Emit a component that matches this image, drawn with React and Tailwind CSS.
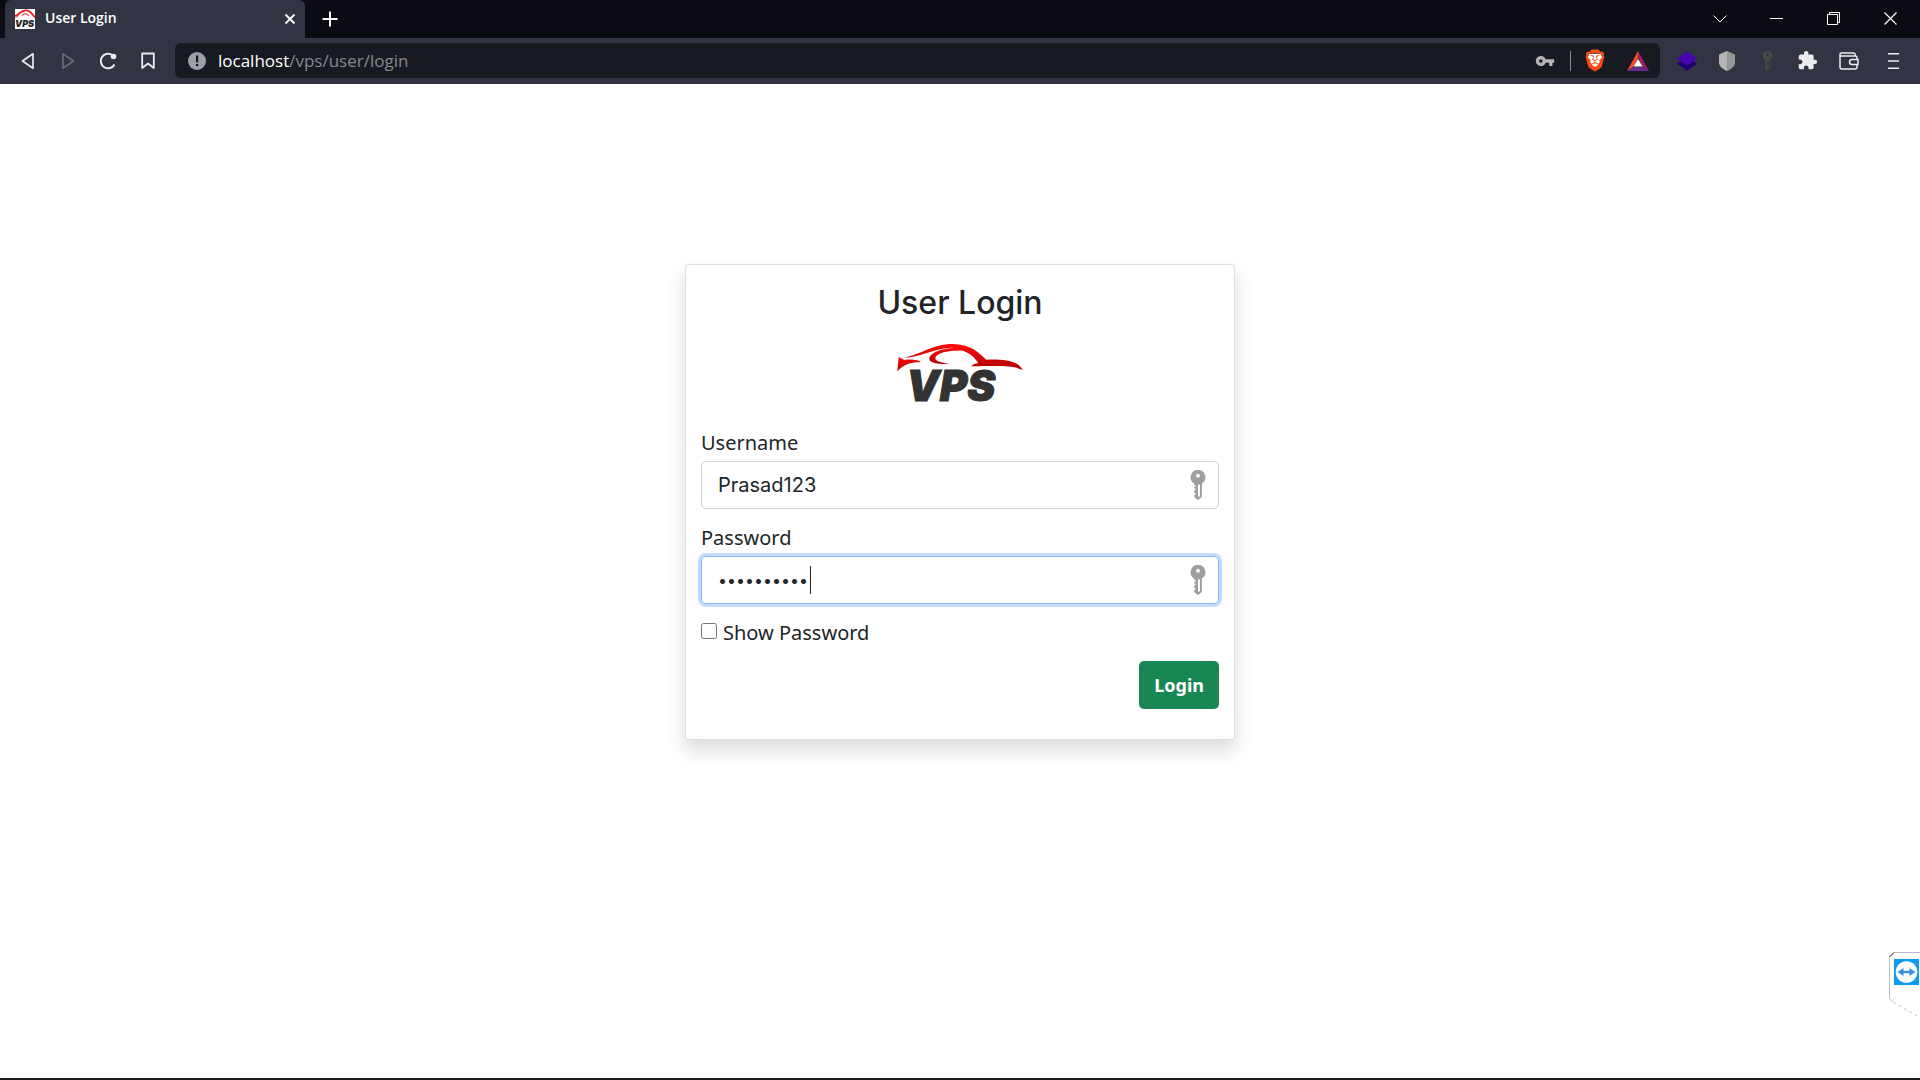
import React, { useState } from "react";
import { MdExtension, MdVpnKey } from "react-icons/md";
import { SiBrave } from "react-icons/si";

function CarOutline() {
  return (
    <>
      <path d="M130 263C185 253 215 222 277 222C330 223 352 245 378 269C425 267 478 272 487 301C465 288 440 287 333 289C337 283 345 281 354 280C347 266 327 241 275 233C225 233 185 261 130 263Z" />
      <path d="M312 236C255 228 205 248 207 268C209 280 235 283 269 282C240 277 225 274 225 264C226 250 265 240 312 242Z" />
      <path d="M115 261L132 270C150 267 177 269 181 277C155 276 130 283 111 304Z" />
    </>
  );
}

function VpsLogo({ className }) {
  return (
    <svg viewBox="110 213 381 192" className={className} role="img" aria-label="VPS">
      <defs>
        <linearGradient id="carRed" x1="0" y1="0" x2="0" y2="1">
          <stop offset="0" stopColor="#ff0a0a" />
          <stop offset="1" stopColor="#b00000" />
        </linearGradient>
      </defs>
      <g fill="url(#carRed)">
        <CarOutline />
      </g>
      <text
        x="138"
        y="394"
        fontFamily="Inter, 'Liberation Sans', sans-serif"
        fontSize="126"
        fontWeight="900"
        fontStyle="italic"
        fill="#333333"
        stroke="#333333"
        strokeWidth="3"
      >
        VPS
      </text>
    </svg>
  );
}

function Favicon() {
  return (
    <svg viewBox="0 0 20 20" className="h-5 w-5 overflow-visible bg-white" aria-hidden="true">
      <path d="M0 7C4 6 5 2 10 1.500S16 4 20 8.500" fill="none" stroke="#e32222" strokeWidth="1.800" />
      <path d="M0 8.500L4 6.500M7 7C8 4 12 4 14 7" fill="none" stroke="#e86060" strokeWidth="1.300" />
      <text x="0" y="18" fontFamily="Inter, sans-serif" fontSize="9" fontWeight="900" fontStyle="italic" fill="#222222">
        VPS
      </text>
    </svg>
  );
}

function KeyIcon({ className }) {
  return (
    <svg viewBox="0 0 16 31" className={className} fill="currentColor" aria-hidden="true">
      <path fillRule="evenodd" d="M8 0a7.500 7.500 0 0 1 4 13.900V28l-4 3-4-3v-2l2-1-2-2v-1.500l2-1.500-2-1.500V18l2-1.500L4 15v-1.100A7.500 7.500 0 0 1 8 0ZM8 4a2 2 0 1 0 0 4 2 2 0 0 0 0-4ZM8 15v12.500h2V15Z" />
    </svg>
  );
}

function TabStrip() {
  return (
    <div className="flex h-[38px] items-stretch bg-[#0b0b14] pl-[5px] text-white">
      <div className="flex w-[300px] items-center rounded-t-md bg-[#323443] pr-[7px] pl-[10px]" role="tab" aria-selected="true">
        <Favicon />
        <span className="ml-[10px] flex-1 pb-[2px] text-[14px] leading-5 font-semibold">User Login</span>
        <button type="button" aria-label="Close tab" className="p-[2px]">
          <svg viewBox="0 0 12 12" className="h-3 w-3" stroke="currentColor" strokeWidth="1.800">
            <path d="M1.500 1.500l9 9M10.500 1.500l-9 9" />
          </svg>
        </button>
      </div>
      <button type="button" aria-label="New tab" className="flex w-[50px] items-center justify-center">
        <svg viewBox="0 0 16 16" className="h-4 w-4" stroke="currentColor" strokeWidth="2">
          <path d="M8 0.500v15M0.500 8h15" />
        </svg>
      </button>
      <div className="ml-auto flex pr-px pb-px">
        <button type="button" aria-label="Search tabs" className="flex w-[57px] items-center justify-center">
          <svg viewBox="0 0 14 8" className="h-2 w-[14px]" fill="none" stroke="currentColor" strokeWidth="1">
            <path d="M0.500 0.500L7 7l6.500-6.500" />
          </svg>
        </button>
        <button type="button" aria-label="Minimize" className="flex w-[57px] items-center justify-center">
          <svg viewBox="0 0 13 13" className="h-[13px] w-[13px]" fill="currentColor">
            <path d="M0 6h13v1H0z" />
          </svg>
        </button>
        <button type="button" aria-label="Restore" className="flex w-[57px] items-center justify-center">
          <svg viewBox="0 0 13 13" className="h-[13px] w-[13px]" fill="none" stroke="currentColor">
            <path d="M0.500 2.500h10v10h-10zM2.500 2.500v-2h10v10h-2" />
          </svg>
        </button>
        <button type="button" aria-label="Close" className="flex w-[57px] items-center justify-center">
          <svg viewBox="0 0 13 13" className="h-[13px] w-[13px]" stroke="currentColor" strokeWidth="1.200">
            <path d="M0.500 0.500l12 12M12.500 0.500l-12 12" />
          </svg>
        </button>
      </div>
    </div>
  );
}

function ToolButton({ label, wide, children }) {
  return (
    <button type="button" aria-label={label} className={wide ? "flex w-11 items-center justify-center" : "flex w-10 items-center justify-center"}>
      {children}
    </button>
  );
}

function Toolbar() {
  return (
    <div className="flex h-[46px] items-center bg-[#323443] pr-[5px] pb-px pl-2 text-[#ececf0]">
      <ToolButton label="Back">
        <svg viewBox="0 0 14 18" className="h-[18px] w-[14px]" fill="none" stroke="currentColor" strokeWidth="1.700" strokeLinejoin="round">
          <path d="M12 1.800v14.400L1.500 9z" />
        </svg>
      </ToolButton>
      <ToolButton label="Forward">
        <svg viewBox="0 0 14 18" className="h-[18px] w-[14px] text-[#6d6e7a]" fill="none" stroke="currentColor" strokeWidth="1.600" strokeLinejoin="round">
          <path d="M2 1.800v14.400L12.500 9z" />
        </svg>
      </ToolButton>
      <ToolButton label="Reload">
        <svg viewBox="0 0 18 18" className="h-[18px] w-[18px]" fill="none" stroke="currentColor" strokeWidth="2">
          <path d="M15.500 12.500A7.300 7.300 0 1 1 13.500 3.200" />
          <circle cx="14.500" cy="4.500" r="2.800" fill="currentColor" stroke="none" />
        </svg>
      </ToolButton>
      <ToolButton label="Bookmark">
        <svg viewBox="0 0 14 18" className="h-[18px] w-[14px]" fill="none" stroke="currentColor" strokeWidth="1.800" strokeLinejoin="round">
          <path d="M1.200 1.500h11.600v14.500L7 11.500 1.200 16z" />
        </svg>
      </ToolButton>
      <div className="ml-[7px] flex h-[35px] flex-1 items-center rounded-md bg-[#181a21] pr-[11px] pl-[13px]">
        <svg viewBox="0 0 18 18" className="h-[18px] w-[18px]" aria-hidden="true">
          <circle cx="9" cy="9" r="9" fill="#9d9fa9" />
          <path d="M8 3.500h2.200v7H8zM8 12h2.200v2.200H8z" fill="#181a21" />
        </svg>
        <div className="ml-3 flex-1 text-[17px] leading-6 text-[#86888e]">
          <span className="text-white">localhost</span>/vps/user/login
        </div>
        <button type="button" aria-label="Saved passwords">
          <MdVpnKey className="h-5 w-5 text-[#b4b4b6]" />
        </button>
        <span className="mr-[13px] ml-[15px] h-5 w-px bg-[#8a8b90]" />
        <button type="button" aria-label="Brave Shields" className="relative">
          <svg viewBox="0 0 22 24" className="absolute inset-0 h-full w-full" aria-hidden="true">
            <path d="M5 5h12l2 5-3 7-5 4-5-4-3-7z" fill="#ffffff" />
          </svg>
          <SiBrave className="relative h-[23px] w-[22px] text-[#fb4b14]" />
        </button>
        <button type="button" aria-label="Brave Rewards" className="ml-[21px]">
          <svg viewBox="0 0 22 20" className="h-5 w-[22px]">
            <path d="M11 0v7L6 16l-6 4z" fill="#ff4724" />
            <path d="M11 0v7l5 9 6 4z" fill="#9e1f63" />
            <path d="M0 20l6-4h10l6 4z" fill="#662d91" />
            <path d="M11 8l4.600 7.500H6.400z" fill="#ffffff" />
          </svg>
        </button>
      </div>
      <span className="w-[7px]" />
      <ToolButton label="Layers extension">
        <svg viewBox="0 0 20 20" className="h-5 w-5">
          <path d="M0 12.500L10 6l10 6.500L10 20z" fill="#1c0073" />
          <path d="M0 7.500L10 0l10 7.500-10 7z" fill="#4506ae" />
        </svg>
      </ToolButton>
      <ToolButton label="Shield extension">
        <svg viewBox="0 0 16 20" className="h-5 w-4">
          <path d="M8 0L0 3.500v8C0 15 3 18 8 20z" fill="#b5b5b5" />
          <path d="M8 0l8 3.500v8c0 3.500-3 6.500-8 8.500z" fill="#979797" />
        </svg>
      </ToolButton>
      <ToolButton label="Key extension">
        <KeyIcon className="h-5 w-[11px] text-[#484848]" />
      </ToolButton>
      <ToolButton label="Extensions">
        <MdExtension className="h-[21px] w-[21px]" />
      </ToolButton>
      <ToolButton label="Wallet" wide>
        <svg viewBox="0 0 20 18" className="h-[18px] w-5" fill="none" stroke="currentColor" strokeWidth="1.500">
          <path d="M18 7V5.500a1.500 1.500 0 0 0-1.500-1.500H1V2.500A1.500 1.500 0 0 1 2.500 1h12.200a1.500 1.500 0 0 1 1.500 1.500V4M1 4v11a2 2 0 0 0 2 2h13a2 2 0 0 0 2-2v-2" />
          <path d="M19 7.500h-6a2.500 2.500 0 0 0 0 5h6z" />
        </svg>
      </ToolButton>
      <ToolButton label="Menu" wide>
        <svg viewBox="0 0 11 16" className="h-4 w-[11px]" fill="currentColor">
          <path d="M0 0h11v1.600H0zM0 7.200h11v1.600H0zM0 14.400h11V16H0z" />
        </svg>
      </ToolButton>
    </div>
  );
}

function LoginCard() {
  const [username, setUsername] = useState("Prasad123");
  const [password, setPassword] = useState("prasad1234");
  const [visible, setVisible] = useState(false);
  return (
    <form
      onSubmit={(e) => e.preventDefault()}
      className="flex w-full max-w-[550px] flex-col rounded border border-[#dfdfdf] bg-white px-[15px] pt-5 pb-[30px] text-[20px] leading-[30px] text-[#212529] shadow-[0_10px_20px_rgba(0,0,0,0.15)]"
    >
      <h1 className="text-center font-[Inter,sans-serif] text-[32px] leading-9 font-medium">User Login</h1>
      <VpsLogo className="mt-5 h-16 w-[127px] self-center overflow-visible" />
      <label htmlFor="username" className="mt-[23px]">
        Username
      </label>
      <div className="relative mt-[3px]">
        <input
          id="username"
          type="text"
          value={username}
          onChange={(e) => setUsername(e.target.value)}
          className="h-12 w-full rounded-[5px] border border-[#ced4da] pr-10 pl-4 font-[Inter,sans-serif] outline-none"
        />
        <KeyIcon className="absolute top-[9px] right-[13px] h-[30px] w-4 text-[#9e9e9e]" />
      </div>
      <label htmlFor="password" className="mt-[14px]">
        Password
      </label>
      <div className="relative mt-[3px]">
        <input
          id="password"
          type={visible ? "text" : "password"}
          value={password}
          onChange={(e) => setPassword(e.target.value)}
          className="h-12 w-full rounded-[5px] border border-[#86b7fe] pr-10 pl-4 font-[Inter,sans-serif] text-[16px] ring-3 ring-[#c2dbfe] outline-none"
        />
        <span className="absolute top-[10px] left-[109px] h-7 w-px bg-[#212529]" />
        <KeyIcon className="absolute top-[9px] right-[13px] h-[30px] w-4 text-[#9e9e9e]" />
      </div>
      <div className="mt-[14px] flex items-center">
        <input id="show" type="checkbox" checked={visible} onChange={(e) => setVisible(e.target.checked)} className="mb-1 h-4 w-4" />
        <label htmlFor="show" className="ml-[6px]">
          Show Password
        </label>
      </div>
      <button type="submit" className="mt-[13px] h-12 self-end rounded-[5px] bg-[#198754] px-[15px] text-[18px] font-bold text-white">
        Login
      </button>
    </form>
  );
}

function RemoteWidget() {
  return (
    <div className="absolute right-0 bottom-[60px]">
      <svg viewBox="0 0 31 66" className="h-[66px] w-[31px]" role="img" aria-label="Remote control panel">
        <path d="M31 0.500H5L0.500 5v41l4 4.500" fill="#ffffff" stroke="#b9bfc6" />
        <path d="M4.500 50.500L31 65.500" fill="none" stroke="#c4c4c4" strokeDasharray="3 3" />
        <path d="M0.500 5L5 0.500" stroke="#333333" />
        <rect x="5" y="7" width="25" height="26" fill="#0f9af5" />
        <circle cx="17.500" cy="20" r="10.800" fill="#ffffff" />
        <path d="M8.500 20l6-4v2.800h6V16l6 4-6 4v-2.800h-6V24z" fill="#3a8ee6" />
      </svg>
    </div>
  );
}

export default function App() {
  return (
    <div className="flex h-screen flex-col overflow-hidden bg-white font-['Noto_Sans','Open_Sans',sans-serif]">
      <header className="font-['Open_Sans','Noto_Sans',sans-serif]">
        <TabStrip />
        <Toolbar />
      </header>
      <main className="relative flex flex-1 items-start justify-center border-b-2 border-[#1c1c1c] pt-[180px]">
        <LoginCard />
        <RemoteWidget />
      </main>
    </div>
  );
}
